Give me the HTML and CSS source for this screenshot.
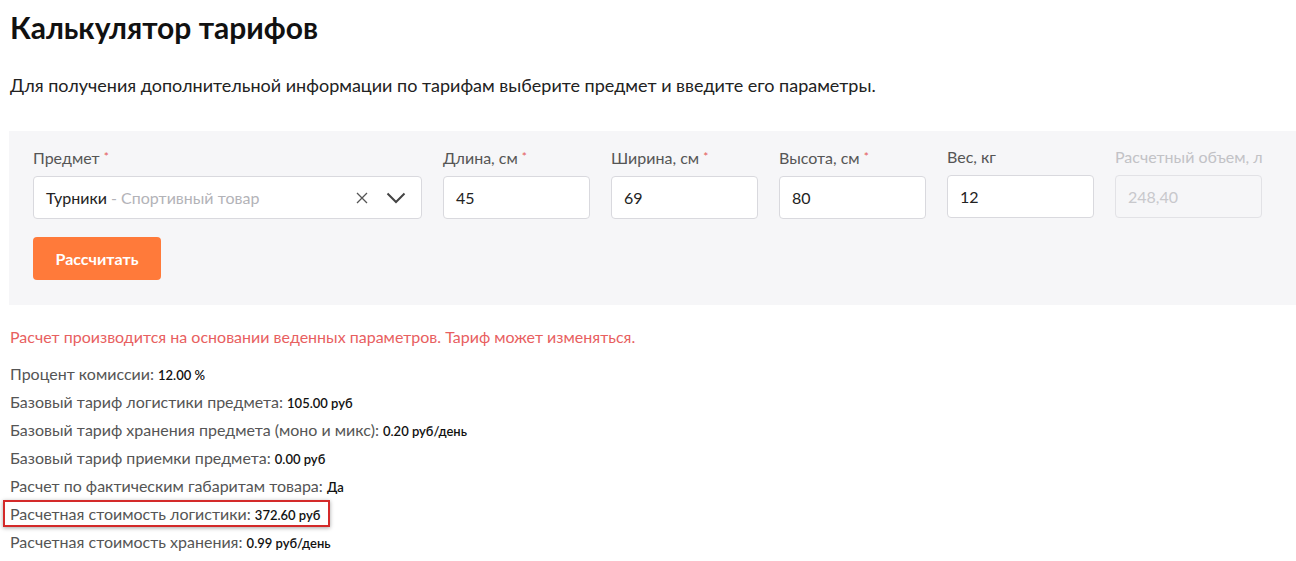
FILE: index.html
```html
<!DOCTYPE html>
<html lang="ru">
<head>
<meta charset="utf-8">
<title>Калькулятор тарифов</title>
<link rel="stylesheet" href="styles.css">
</head>
<body>
<div class="page">
  <h1 class="title">Калькулятор тарифов</h1>
  <p class="intro">Для получения дополнительной информации по тарифам выберите предмет и введите его параметры.</p>

  <div class="panel">
    <div class="fields">
      <div class="field field-subject">
        <div class="label">Предмет <span class="req">*</span></div>
        <div class="box select">
          <span class="sel-value">Турники <span class="sel-cat">- Спортивный товар</span></span>
          <span class="sel-icons">
            <svg class="ic-x" width="12" height="12" viewBox="0 0 12 12"><path d="M1 1L11 11M11 1L1 11" stroke="#555" stroke-width="1.3" fill="none"/></svg>
            <svg class="ic-chev" width="20" height="12" viewBox="0 0 20 12"><path d="M1.5 1.5L10 10L18.5 1.5" stroke="#444" stroke-width="2" fill="none"/></svg>
          </span>
        </div>
      </div>
      <div class="field">
        <div class="label">Длина, см <span class="req">*</span></div>
        <div class="box">45</div>
      </div>
      <div class="field">
        <div class="label">Ширина, см <span class="req">*</span></div>
        <div class="box">69</div>
      </div>
      <div class="field">
        <div class="label">Высота, см <span class="req">*</span></div>
        <div class="box">80</div>
      </div>
      <div class="field">
        <div class="label">Вес, кг</div>
        <div class="box">12</div>
      </div>
      <div class="field disabled">
        <div class="label">Расчетный объем, л</div>
        <div class="box">248,40</div>
      </div>
    </div>
    <button class="btn">Рассчитать</button>
  </div>

  <p class="note">Расчет производится на основании веденных параметров. Тариф может изменяться.</p>

  <ul class="results">
    <li>Процент комиссии: <b>12.00 %</b></li>
    <li>Базовый тариф логистики предмета: <b>105.00 руб</b></li>
    <li>Базовый тариф хранения предмета (моно и микс): <b>0.20 руб/день</b></li>
    <li>Базовый тариф приемки предмета: <b>0.00 руб</b></li>
    <li>Расчет по фактическим габаритам товара: <b>Да</b></li>
    <li class="hl"><span class="hl-box">Расчетная стоимость логистики: <b>372.60 руб</b></span></li>
    <li>Расчетная стоимость хранения: <b>0.99 руб/день</b></li>
  </ul>
</div>
</body>
</html>
```

FILE: styles.css
```css
* { box-sizing: border-box; }
html, body { margin: 0; padding: 0; background: #fff; }
body {
  font-family: Lato, "Noto Sans", sans-serif;
  color: #222;
}
.page {
  padding: 7px 0 0 9px;
  overflow: hidden;
}
.title {
  margin: 0 0 0 1px;
  font-size: 30px;
  line-height: 40px;
  font-weight: 700;
  color: #111;
}
.intro {
  margin: 26px 0 0 1px;
  font-size: 18px;
  line-height: 24px;
  color: #222;
}
.panel {
  margin-top: 34px;
  background: #f6f6f8;
  padding: 16px 24px 24px;
  height: 174px;
  margin-right: -20px;
}
.fields {
  display: flex;
  gap: 21px;
}
.field { width: 147px; }
.field-subject { width: 389px; }
.label {
  font-size: 16px;
  line-height: 20px;
  color: #555;
  margin-bottom: 8px;
  white-space: nowrap;
}
.req { color: #e45a5a; font-size: 12px; vertical-align: 3px; }
.box {
  height: 43px;
  border: 1px solid #d9d9de;
  border-radius: 4px;
  background: #fff;
  padding: 0 12px;
  display: flex;
  align-items: center;
  font-size: 16px;
  color: #222;
}
.select { justify-content: space-between; padding-right: 15px; }
.sel-value { font-size: 16px; color: #222; }
.sel-cat { color: #b3b3b8; }
.sel-icons { display: flex; align-items: center; gap: 18px; }
.disabled .label { color: #c2c2c6; }
.disabled .box { background: #f6f6f8; color: #c8c8cc; border-color: #e2e2e6; }
.btn {
  margin-top: 18px;
  width: 128px;
  height: 43px;
  border: 0;
  border-radius: 4px;
  background: #ff7a3a;
  color: #fff;
  font-family: Lato, "Noto Sans", sans-serif;
  font-weight: 700;
  font-size: 16px;
  padding: 0;
}
.note {
  margin: 21px 0 0 1px;
  font-size: 16px;
  line-height: 22px;
  color: #e8605f;
}
.results {
  list-style: none;
  margin: 12px 0 0 1px;
  padding: 0;
}
.results li {
  height: 28px;
  font-size: 16px;
  line-height: 28px;
  color: #555;
  white-space: nowrap;
}
.results b {
  font-size: 13px;
  line-height: 1;
  font-weight: 600;
  color: #111;
}
.hl-box {
  display: inline-block;
  margin-left: -7px;
  padding: 0 8px 0 5px;
  line-height: 23px;
  border: 2px solid #d42a2a;
  box-shadow: 0 1px 4px rgba(0,0,0,0.35);
}
```
